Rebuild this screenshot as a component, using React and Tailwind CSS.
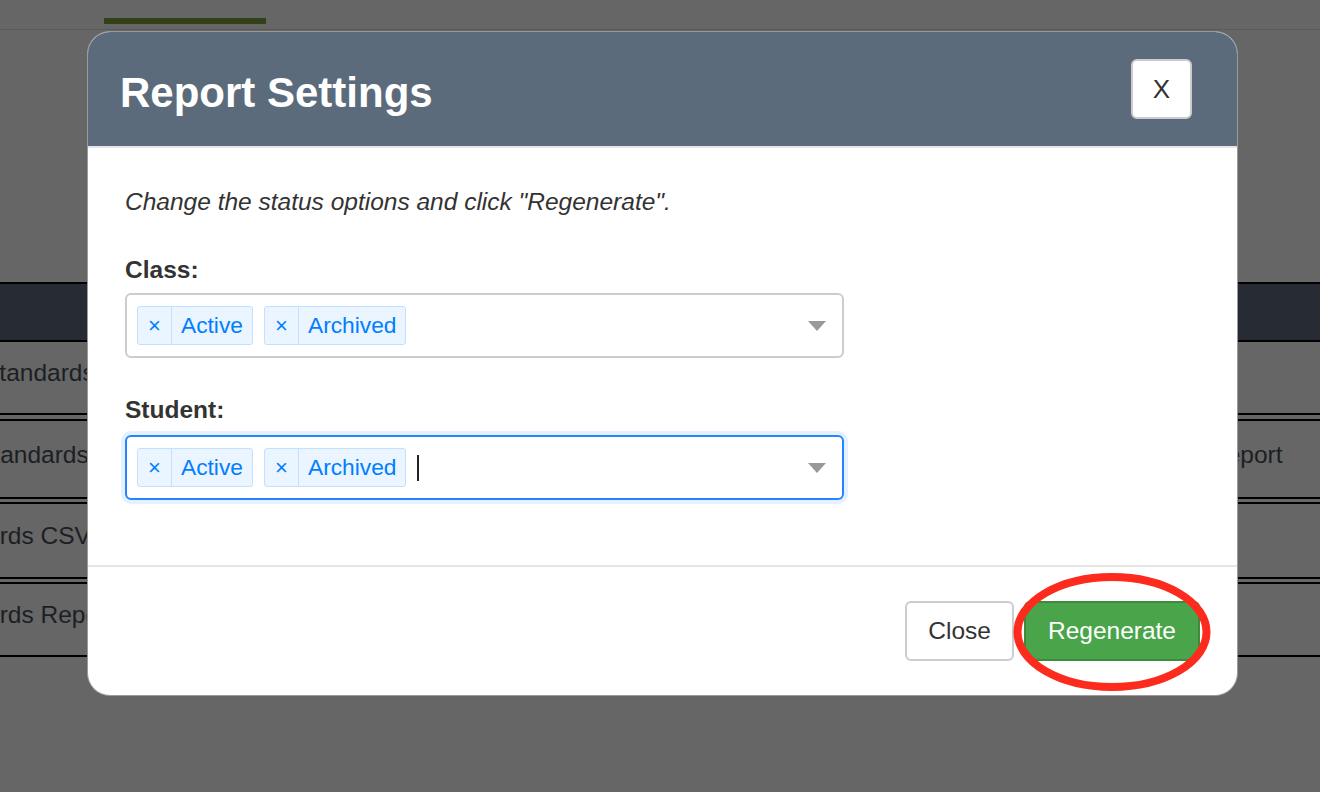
import React from "react";

// Tag shown inside the multi-select box
function Tag({ label }) {
  return (
    <div className="flex h-[39px] items-stretch rounded-[3px] border border-[#c2e0ff] bg-[#ebf5ff] text-[#007eff]">
      <span className="flex w-[34px] items-center justify-center border-r border-[#c2e0ff] text-[22px] leading-none">×</span>
      <span className="flex items-center px-[9px] text-[22.75px]">{label}</span>
    </div>
  );
}

function MultiSelect({ focused }) {
  return (
    <div
      className={`flex h-[65px] w-[719px] items-center rounded-[6px] bg-white pl-[10px] pr-[16px] ${
        focused
          ? "border-2 border-[#2684ff] shadow-[0_0_0_4px_#e5f1ff]"
          : "border-2 border-[#cccccc]"
      }`}
    >
      <div className="flex flex-1 items-center gap-[11px]">
        <Tag label="Active" />
        <Tag label="Archived" />
        {focused && <span className="h-[26px] w-[2px] bg-[#222]" />}
      </div>
      <svg width="18" height="10" viewBox="0 0 18 10">
        <path d="M0 0 L18 0 L9 10 Z" fill="#999" />
      </svg>
    </div>
  );
}

function BgRow({ left, leftShift, right, className }) {
  return (
    <div className={`flex items-center border-black pb-[8px] ${className}`}>
      <div className="w-[87px] overflow-hidden whitespace-nowrap text-[24.5px] text-[#1c1f24]">
        <span style={{ marginLeft: leftShift }}>{left}</span>
      </div>
      <div className="flex-1" />
      <div className="w-[101px] overflow-hidden whitespace-nowrap text-[24.5px] text-[#1c1f24]">
        {right && <span className="-ml-[10px]">{right}</span>}
      </div>
    </div>
  );
}

export default function App() {
  return (
    <div className="relative h-[792px] w-[1320px] overflow-hidden bg-[#666666] font-['Liberation_Sans',Arial,sans-serif]">
      {/* top nav behind the overlay */}
      <div className="h-[30px] border-b border-[#5a5a5a] pl-[104px] pt-[18px]">
        <div className="h-[6px] w-[162px] bg-[#33411a]" />
      </div>

      {/* table behind the overlay */}
      <div className="mt-[252px]">
        <div className="h-[60px] border-y-2 border-black bg-[#252a33]" />
        <BgRow left="Standards" leftShift="-17px" className="h-[73px] border-b-2" />
        <BgRow left="Standards Report" leftShift="-23px" right="Report" className="mt-[4px] h-[80px] border-y-2" />
        <BgRow left="Standards CSV" leftShift="-78px" className="mt-[3px] h-[77px] border-y-2" />
        <BgRow left="Standards Report" leftShift="-78px" className="mt-[3px] h-[75px] border-y-2 border-b-2" />
      </div>

      {/* modal */}
      <div className="absolute left-[87px] top-[31px] w-[1151px] overflow-hidden rounded-[23px] border border-[#9a9a9a] bg-white">
        <div className="flex h-[116px] items-center justify-between border-b-2 border-[#e5e5e5] bg-[#5b6b7b] pl-[32px] pr-[45px]">
          <h2 className="pt-[6px] text-[42px] font-bold text-white">Report Settings</h2>
          <button className="flex h-[60px] w-[61px] items-center justify-center rounded-[6px] border-2 border-[#cccccc] bg-white text-[26px] text-[#333]">
            X
          </button>
        </div>

        <div className="h-[417px] px-[37px] pt-[40px] text-[#333]">
          <p className="text-[24.5px] italic leading-[28px]">Change the status options and click "Regenerate".</p>
          <label className="mt-[40px] block text-[24.5px] font-bold leading-[28px]">Class:</label>
          <div className="mt-[9px]">
            <MultiSelect />
          </div>
          <label className="mt-[38px] block text-[24.5px] font-bold leading-[28px]">Student:</label>
          <div className="mt-[11px]">
            <MultiSelect focused />
          </div>
        </div>

        <div className="flex h-[130px] items-center justify-end gap-[10px] border-t-2 border-[#e5e5e5] pr-[37px]">
          <button className="h-[60px] rounded-[6px] border-2 border-[#cccccc] bg-white px-[21px] text-[24.5px] text-[#333]">
            Close
          </button>
          <button className="h-[60px] rounded-[6px] border-2 border-[#3d8b3d] bg-[#4aa54a] px-[22px] text-[24.5px] text-white">
            Regenerate
          </button>
        </div>
      </div>

      {/* red annotation ellipse */}
      <svg className="absolute left-[1008px] top-[568px]" width="208" height="128" viewBox="0 0 208 128">
        <ellipse cx="104" cy="64" rx="94.5" ry="55" fill="none" stroke="#fd2a1e" strokeWidth="8" />
      </svg>
    </div>
  );
}
